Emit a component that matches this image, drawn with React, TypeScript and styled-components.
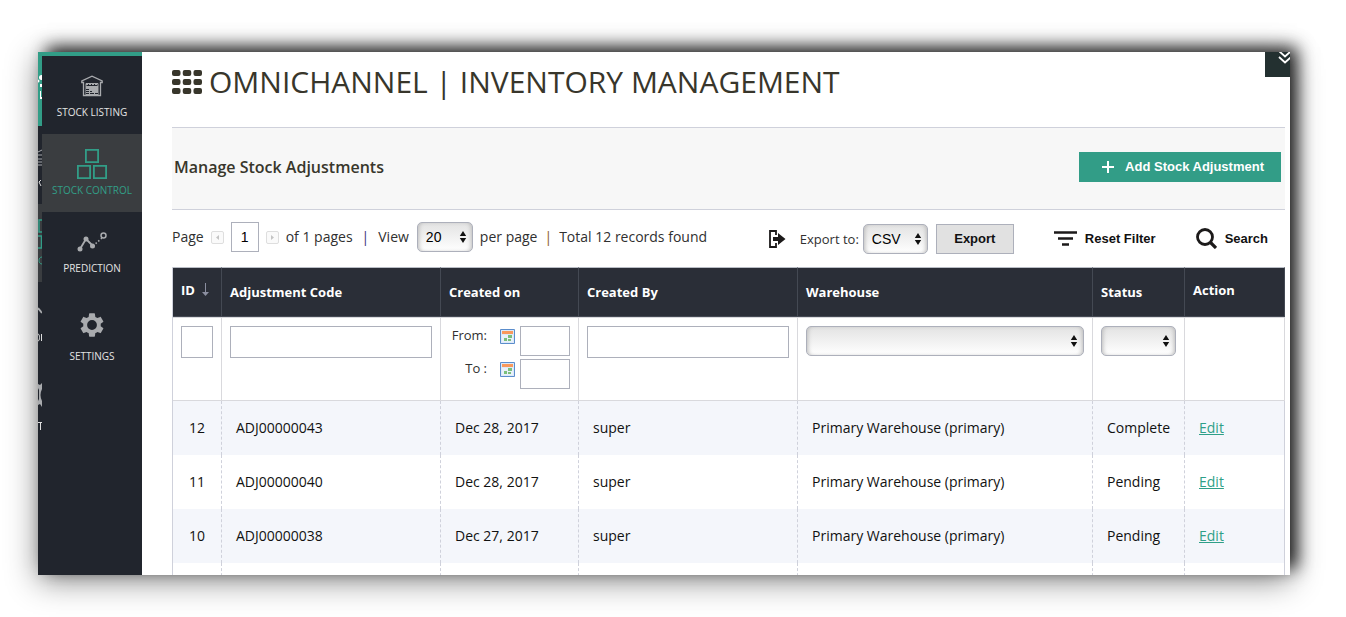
import React from 'react';
import styled, { createGlobalStyle, css } from 'styled-components';

const sans = '"Open Sans", "Noto Sans", sans-serif';
const arial = '"Liberation Sans", Arial, sans-serif';
const green = '#329d87';
const navy = '#21252d';
const line = '#cfd1db';

const GlobalStyle = createGlobalStyle`
  *, *::before, *::after { box-sizing: border-box; }
  body {
    margin: 0;
    background: #fff;
    color: #303030;
    font-family: ${sans};
    font-size: 14px;
    line-height: 20px;
  }
  svg { display: block; flex: none; }
`;

const Stage = styled.div`
  height: 100vh;
  padding: 52px 56px 42px 38px;
  overflow: hidden;
`;

const Frame = styled.div`
  position: relative;
  display: flex;
  height: 100%;
  background: #fff;
  box-shadow: 8px -6px 16px -1px rgba(0, 0, 0, 0.85), 0 6px 30px rgba(0, 0, 0, 0.45);
`;

const Window = styled.div`
  display: flex;
  flex: 1;
  min-width: 0;
  overflow: hidden;
`;

const Strip = styled.div`
  flex: none;
  width: 4px;
  background: ${navy};
  overflow: hidden;
`;

const Nav = styled.nav`
  flex: none;
  width: 100px;
  border-top: 4px solid ${green};
  background: ${navy};
`;

const NavItem = styled.a<{ $active?: boolean }>`
  display: flex;
  flex-direction: column;
  align-items: center;
  gap: 1px;
  padding: 12px 0 15px;
  color: ${(p) => (p.$active ? green : '#e4e4e4')};
  background: ${(p) => (p.$active ? '#3a3d40' : 'transparent')};
  font-size: 10px;
  line-height: 14px;
  text-decoration: none;
  white-space: nowrap;
`;

const NavIcon = styled.span<{ $tall?: boolean }>`
  display: flex;
  align-items: center;
  height: ${(p) => (p.$tall ? 46 : 36)}px;
`;

const Main = styled.main`
  flex: 1;
  min-width: 0;
  padding: 0 5px 0 30px;
`;

const CornerButton = styled.button`
  position: absolute;
  top: 0;
  right: 0;
  width: 25px;
  height: 25px;
  padding: 0;
  border: 0;
  background: #233030;
  overflow: hidden;
`;

const PageTitle = styled.h1`
  display: flex;
  align-items: center;
  gap: 7px;
  height: 75px;
  margin: 0;
  padding-bottom: 16px;
  color: #38362b;
  font-size: 30px;
  font-weight: 400;
  line-height: 40px;
  white-space: nowrap;
`;

const Panel = styled.section`
  display: flex;
  align-items: center;
  justify-content: space-between;
  height: 83px;
  padding: 0 4px 3px 2px;
  border: solid ${line};
  border-width: 1px 0;
  background: #f7f7f7;
`;

const PanelTitle = styled.h2`
  margin: 0;
  color: #38362b;
  font-size: 16px;
  font-weight: 600;
`;

const AddButton = styled.button`
  display: flex;
  align-items: center;
  gap: 11px;
  height: 30px;
  padding: 0 17px 0 23px;
  border: 0;
  background: ${green};
  color: #fff;
  font: 700 13px/20px ${arial};
  white-space: nowrap;
`;

const Toolbar = styled.div`
  display: flex;
  align-items: center;
  justify-content: space-between;
  height: 57px;
  padding-right: 17px;
  white-space: nowrap;
`;

const Group = styled.div<{ $gap: number }>`
  display: flex;
  align-items: center;
  gap: ${(p) => p.$gap}px;
`;

const Pager = styled(Group)`
  padding-bottom: 3px;
`;

const ToolLabel = styled.label`
  display: flex;
  align-items: center;
  gap: 8px;
`;

const ExportLabel = styled(ToolLabel)`
  gap: 4px;
  font-size: 13px;
`;

const Divider = styled.span<{ $color: string; $space: number }>`
  margin: 0 ${(p) => p.$space}px;
  color: ${(p) => p.$color};
`;

const PagerButton = styled.button`
  display: grid;
  place-items: center;
  width: 13px;
  height: 13px;
  padding: 0;
  border: 1px solid #dedede;
  background: #fafafa;
  border-radius: 2px;
`;

const fieldBase = css`
  border: 1px solid #adb0bb;
  background: #fff;
  color: #000;
  font: 14px/20px ${arial};
`;

const PageInput = styled.input`
  ${fieldBase}
  width: 28px;
  height: 30px;
  padding: 0;
  text-align: center;
`;

const SelectBox = styled.span<{ $width?: string }>`
  display: grid;
  width: ${(p) => p.$width || '100%'};
  align-items: center;

  > * { grid-area: 1 / 1; }
  > svg { justify-self: end; margin-right: 6px; pointer-events: none; }
`;

const NativeSelect = styled.select`
  ${fieldBase}
  appearance: none;
  width: 100%;
  height: 30px;
  padding: 0 8px;
  border-radius: 5px;
  background: linear-gradient(#e3e3e3, #fff);
  box-shadow: inset 3px 0 4px -2px #bbb, inset -3px 0 4px -2px #bbb;
`;

const ExportButton = styled.button`
  width: 78px;
  height: 30px;
  border: 1px solid #adb0bb;
  background: #e1e1e1;
  color: #111;
  font: 700 13px/20px ${arial};
`;

const TextButton = styled.button`
  display: flex;
  align-items: center;
  gap: 8px;
  padding: 0;
  border: 0;
  background: none;
  color: #111;
  font: 700 13px/20px ${arial};
`;

const Grid = styled.table`
  width: 100%;
  table-layout: fixed;
  border-spacing: 0;
  border-left: 1px solid ${line};
`;

const HeadCell = styled.th<{ $raised?: boolean }>`
  height: 50px;
  padding: ${(p) => (p.$raised ? '0 8px 5px' : '0 8px 1px')};
  border: solid #444953;
  border-width: 1px 1px 1px 0;
  border-top-color: #b9bdc5;
  background: #2a2e37;
  color: #fff;
  font-size: 13px;
  font-weight: 700;
  text-align: left;
  white-space: nowrap;
`;

const SortLabel = styled.span`
  display: flex;
  align-items: center;
  gap: 7px;
`;

const FilterCell = styled.td`
  height: 84px;
  padding: 8px;
  border: solid #d9d9dd;
  border-width: 1px 1px 1px 0;
  vertical-align: top;
`;

const FilterInput = styled.input`
  ${fieldBase}
  display: block;
  width: 100%;
  height: 32px;
  padding: 0 6px;
`;

const DateRow = styled.div`
  display: grid;
  grid-template-columns: 38px 1fr 50px;
  align-items: start;
  justify-items: end;
  margin-bottom: 3px;
  font-size: 13px;
  line-height: 18px;
`;

const DateInput = styled(FilterInput)`
  height: 30px;
`;

const CalendarButton = styled.button`
  padding: 0;
  margin: 3px 5px 0 0;
  border: 0;
  background: none;
`;

const Row = styled.tr<{ $shaded?: boolean }>`
  background: ${(p) => (p.$shaded ? '#f4f6fb' : '#fff')};
`;

const Cell = styled.td<{ $center?: boolean }>`
  height: 54px;
  padding: ${(p) => (p.$center ? 0 : '0 0 0 14px')};
  border-right: 1px dashed ${line};
  color: #111;
  text-align: ${(p) => (p.$center ? 'center' : 'left')};
  white-space: nowrap;

  &:last-child { border-right-style: solid; }
`;

const EditLink = styled.a`
  color: #2f9f88;
  text-decoration: underline;
`;

const UpDown = () => (
  <svg width="8" height="14" viewBox="0 0 8 14">
    <path d="M4 1L7.200 6H.8zM4 13L.8 8h6.400z" fill="#111" />
  </svg>
);

type SelectProps = { width?: string; label: string; options: string[] };

const Select = ({ width, label, options }: SelectProps) => (
  <SelectBox $width={width}>
    <NativeSelect aria-label={label}>
      {options.map((o) => <option key={o}>{o}</option>)}
    </NativeSelect>
    <UpDown />
  </SelectBox>
);

const WarehouseIcon = () => (
  <svg width="22" height="22" viewBox="0 0 22 22" fill="none" stroke="#a9abae">
    <path d="M.8 7.500V6L11 1.200 21.200 6v1.500H19.500V20.500H2.500V7.500z" strokeWidth="1.300" />
    <path d="M5 20V8.500h12V20" />
    <path d="M5 9h12" strokeWidth="2" strokeDasharray="2 1" />
    <path d="M5 11h12v9.500H5z" fill="#a9abae" stroke="none" />
    <path d="M5 14.500h4M5 16.500h6M5 18.500h8M10 18.500h7" stroke="#21252d" strokeDasharray="3 1" />
  </svg>
);

const BoxesIcon = () => (
  <svg width="30" height="30" viewBox="0 0 30 30" fill="none" stroke={green} strokeWidth="1.800">
    <path d="M8.900.9h12.200v12.200H8.900zM.9 16.900h12.200v12.200H.9zM16.900 16.900h12.200v12.200H16.900z" />
  </svg>
);

const PredictionIcon = () => (
  <svg width="30" height="20" viewBox="0 0 30 20" fill="none" stroke="#a9abae">
    <path d="M3 17L9 7l7 7" strokeWidth="1.800" />
    <path d="M16 14l9-8" strokeWidth="1.500" strokeDasharray="1.500 2" />
    <g fill="#a9abae" stroke="none">
      <circle cx="3" cy="17" r="2.500" /><circle cx="9" cy="7" r="2.500" /><circle cx="15.500" cy="14" r="2.500" />
    </g>
    <circle cx="26.500" cy="3.500" r="2.500" strokeWidth="1.500" />
  </svg>
);

const GearIcon = () => (
  <svg width="28" height="28" viewBox="0 0 24 24" fill="#a9abae">
    <path d="M19.430 12.980c.04-.32.07-.64.07-.98s-.03-.66-.07-.98l2.110-1.650c.19-.15.24-.42.12-.64l-2-3.460c-.12-.22-.39-.3-.61-.22l-2.490 1c-.52-.4-1.080-.73-1.690-.98l-.38-2.650C14.460 2.180 14.250 2 14 2h-4c-.25 0-.46.18-.49.42l-.38 2.650c-.61.25-1.170.59-1.690.98l-2.490-1c-.23-.09-.49 0-.61.22l-2 3.460c-.13.22-.07.49.12.64l2.110 1.650c-.04.32-.07.65-.07.98s.03.66.07.98l-2.110 1.650c-.19.15-.24.42-.12.64l2 3.460c.12.22.39.3.61.22l2.490-1c.52.4 1.080.73 1.690.98l.38 2.650c.03.24.24.42.49.42h4c.25 0 .46-.18.49-.42l.38-2.650c.61-.25 1.170-.59 1.690-.98l2.490 1c.23.09.49 0 .61-.22l2-3.460c.12-.22.07-.49-.12-.64zM12 16.200a4.200 4.200 0 1 1 0-8.400 4.200 4.200 0 0 1 0 8.400z" />
  </svg>
);

/* Sliver of the collapsed menu that stays visible beside the open one. */
const CollapsedMenu = () => (
  <svg width="4" height="523" viewBox="0 0 4 523" fill="none">
    <path d="M0 0h4v74H0z" fill={green} />
    <path d="M0 152h4v78H0z" fill="#3a3d40" />
    <g fill="#fff">
      <circle cx="3.500" cy="25.500" r="2.500" />
      <circle cx="0" cy="29" r="1.500" />
      <path d="M2 32h2v3H2zM2 39h1v6h1v2H2z" />
    </g>
    <path d="M0 100l4-2M0 103h4M0 107h4M0 110h4M0 113h4" stroke="#a9abae" />
    <path d="M3 128l-2 2 2 4" stroke="#ddd" />
    <path d="M4 168H1v12h3M0 184h3.500v12H0" stroke={green} strokeWidth="1.500" />
    <path d="M4 205c-4 0-4 7 0 7" stroke={green} />
    <path d="M0 256l4 5" stroke="#a9abae" strokeWidth="2" />
    <path d="M0 282c2 0 2 7 0 7M3.500 282v7" stroke="#ddd" />
    <path d="M4 331v6q-3 6 0 12v6l-2-3-2 1v-4l1-2v-9l-1-2v-4l2 1z" fill="#a9abae" />
    <path d="M0 370.500h4M2.500 370v8" stroke="#ddd" />
  </svg>
);

const CalendarIcon = () => (
  <svg width="15" height="15" viewBox="0 0 15 15">
    <path d="M.5.5h14v14H.5z" fill="#dce9f8" stroke="#5b8dcc" />
    <path d="M2 2h11v3H2z" fill="#f9995c" />
    <path d="M2 6h11v7H2z" fill="#e9f1fa" />
    <path d="M8 6h4v3H8zM4 9h3v3H4zM8 10h3v2H8z" fill="#7abf7c" />
  </svg>
);

const rows = [
  ['12', 'ADJ00000043', 'Dec 28, 2017', 'super', 'Primary Warehouse (primary)', 'Complete'],
  ['11', 'ADJ00000040', 'Dec 28, 2017', 'super', 'Primary Warehouse (primary)', 'Pending'],
  ['10', 'ADJ00000038', 'Dec 27, 2017', 'super', 'Primary Warehouse (primary)', 'Pending'],
];

const headings = ['Adjustment Code', 'Created on', 'Created By', 'Warehouse', 'Status'];

export default function App() {
  return (
    <>
      <GlobalStyle />
      <Stage>
        <Frame>
          <Window>
            <Strip><CollapsedMenu /></Strip>
            <Nav>
              <NavItem href="#listing"><NavIcon><WarehouseIcon /></NavIcon>STOCK LISTING</NavItem>
              <NavItem href="#control" $active><NavIcon><BoxesIcon /></NavIcon>STOCK CONTROL</NavItem>
              <NavItem href="#prediction"><NavIcon><PredictionIcon /></NavIcon>PREDICTION</NavItem>
              <NavItem href="#settings"><NavIcon $tall><GearIcon /></NavIcon>SETTINGS</NavItem>
            </Nav>
            <Main>
              <PageTitle>
                <svg width="30" height="24" viewBox="0 0 30 24" fill="#38362b">
                  {[0, 9, 18].map((y) => [0, 10.750, 21.500].map((x) => (
                    <rect key={`${x}-${y}`} x={x} y={y} width="8.500" height="6" rx="2" />
                  )))}
                </svg>
                OMNICHANNEL | INVENTORY MANAGEMENT
              </PageTitle>
              <Panel>
                <PanelTitle>Manage Stock Adjustments</PanelTitle>
                <AddButton type="button">
                  <svg width="12" height="12" viewBox="0 0 12 12">
                    <path d="M6 0v12M0 6h12" stroke="#fff" strokeWidth="2" />
                  </svg>
                  Add Stock Adjustment
                </AddButton>
              </Panel>
              <Toolbar>
                <Pager $gap={7}>
                  <label htmlFor="page">Page</label>
                  <PagerButton type="button" aria-label="Previous page">
                    <svg width="5" height="5" viewBox="0 0 5 5"><path d="M4 0v5L1 2.500z" fill="#c4c4c4" /></svg>
                  </PagerButton>
                  <PageInput id="page" defaultValue="1" />
                  <PagerButton type="button" aria-label="Next page">
                    <svg width="5" height="5" viewBox="0 0 5 5"><path d="M1 0v5l3-2.500z" fill="#c4c4c4" /></svg>
                  </PagerButton>
                  <span>of 1 pages</span>
                  <Divider $color="#35357c" $space={2}>|</Divider>
                  <ToolLabel>View<Select width="56px" label="Rows per page" options={['20']} /></ToolLabel>
                  <span>per page</span>
                  <Divider $color="#8a5a15" $space={0}>|</Divider>
                  <span>Total 12 records found</span>
                </Pager>
                <Group $gap={40}>
                  <Group $gap={8}>
                    <Group $gap={14}>
                      <svg width="17" height="18" viewBox="0 0 17 18">
                        <path d="M7 5V1H1v16h6v-4" fill="none" stroke="#1c1a1a" strokeWidth="1.800" />
                        <path d="M4 7h5V3l7.500 6L9 15v-4H4z" fill="#1c1a1a" />
                      </svg>
                      <ExportLabel>Export to:<Select width="65px" label="Export format" options={['CSV']} /></ExportLabel>
                    </Group>
                    <ExportButton type="button">Export</ExportButton>
                  </Group>
                  <TextButton type="button">
                    <svg width="23" height="15" viewBox="0 0 23 15" stroke="#1c1a1a" strokeWidth="2.600">
                      <path d="M0 1.500h23M4 7.500h15M8 13.500h7" />
                    </svg>
                    Reset Filter
                  </TextButton>
                  <TextButton type="button">
                    <svg width="21" height="21" viewBox="0 0 21 21" fill="none" stroke="#1c1a1a">
                      <circle cx="9" cy="9" r="7.500" strokeWidth="2.800" />
                      <path d="M14.500 14.500l5.500 5.500" strokeWidth="3.200" />
                    </svg>
                    Search
                  </TextButton>
                </Group>
              </Toolbar>
              <Grid>
                <colgroup>
                  <col width="49" /><col width="219" /><col width="138" /><col width="219" />
                  <col /><col width="92" /><col width="100" />
                </colgroup>
                <thead>
                  <tr>
                    <HeadCell $raised>
                      <SortLabel>
                        ID
                        <svg width="7" height="13" viewBox="0 0 7 13" fill="#8b8fa0">
                          <path d="M3 0h1v9h3l-3.500 4L0 9h3z" />
                        </svg>
                      </SortLabel>
                    </HeadCell>
                    {headings.map((h) => <HeadCell key={h}>{h}</HeadCell>)}
                    <HeadCell $raised>Action</HeadCell>
                  </tr>
                </thead>
                <tbody>
                  <tr>
                    <FilterCell><FilterInput aria-label="ID" /></FilterCell>
                    <FilterCell><FilterInput aria-label="Adjustment Code" /></FilterCell>
                    <FilterCell>
                      <DateRow>
                        <label htmlFor="from">From:</label>
                        <CalendarButton type="button" aria-label="Pick start date"><CalendarIcon /></CalendarButton>
                        <DateInput id="from" />
                      </DateRow>
                      <DateRow>
                        <label htmlFor="to">To :</label>
                        <CalendarButton type="button" aria-label="Pick end date"><CalendarIcon /></CalendarButton>
                        <DateInput id="to" />
                      </DateRow>
                    </FilterCell>
                    <FilterCell><FilterInput aria-label="Created By" /></FilterCell>
                    <FilterCell><Select label="Warehouse" options={['']} /></FilterCell>
                    <FilterCell><Select label="Status" options={['']} /></FilterCell>
                    <FilterCell />
                  </tr>
                  {rows.map((r, i) => (
                    <Row key={r[0]} $shaded={i % 2 === 0}>
                      {r.map((v, j) => <Cell key={j} $center={j === 0}>{v}</Cell>)}
                      <Cell><EditLink href={`#${r[1]}`}>Edit</EditLink></Cell>
                    </Row>
                  ))}
                  <Row>
                    {[0, 1, 2, 3, 4, 5, 6].map((j) => <Cell key={j} />)}
                  </Row>
                </tbody>
              </Grid>
            </Main>
          </Window>
          <CornerButton type="button" aria-label="Expand header">
            <svg width="25" height="25" viewBox="0 0 25 25" fill="none" stroke="#fff" strokeWidth="1.800">
              <path d="M14-1l6 5.500L26-1M14 5l6 5.500L26 5" />
            </svg>
          </CornerButton>
        </Frame>
      </Stage>
    </>
  );
}
